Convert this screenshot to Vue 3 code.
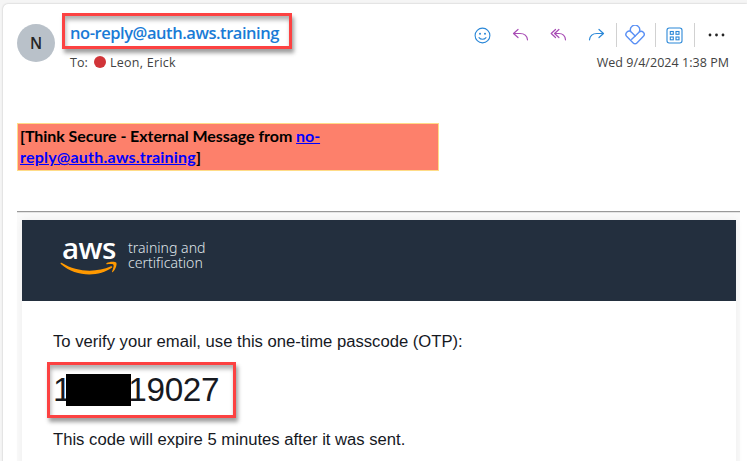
<script setup>
const dots = [2, 8.5, 15]
</script>

<template>
  <div class="page">
    <article class="card">
      <header class="head">
        <div class="avatar">N</div>
        <div class="who">
          <div class="sender mark"><span>no-reply@auth.aws.training</span></div>
          <div class="to"><span class="to-label">To:</span><i class="presence"></i><span class="name">Leon, Erick</span></div>
        </div>
        <div class="side">
          <div class="tools">
            <svg class="icon smile" viewBox="0 0 17 17"><g fill="none" stroke="#2b88d8"><circle cx="8.5" cy="8.5" r="7.4" stroke-width="1.1" /><path d="M5 10.6c1.7 2.2 5.3 2.2 7 0" stroke-width="1.1" stroke-linecap="round" /></g><circle cx="6" cy="6.8" r="1" fill="#2b88d8" /><circle cx="11" cy="6.8" r="1" fill="#2b88d8" /></svg>
            <svg class="icon reply" viewBox="0 0 17 14"><path d="M6 1.500 1.500 5.500l4.500 4M1.700 5.500h6.300c4.400 0 7 2 7.500 6.300" fill="none" stroke="#a84db5" stroke-width="1.2" stroke-linecap="round" stroke-linejoin="round" /></svg>
            <svg class="icon replyall" viewBox="0 0 17 14"><path d="M5.500 1.500 1.200 5.500l4.300 4M8.900 1.500 4.600 5.500l4.300 4M5 5.500h3.800c4 0 6.300 2 6.700 6.300" fill="none" stroke="#a84db5" stroke-width="1.2" stroke-linecap="round" stroke-linejoin="round" /></svg>
            <svg class="icon forward" viewBox="0 0 17 14"><path d="m11 1.500 4.500 4-4.500 4M15.300 5.500H9C4.600 5.500 2 7.500 1.500 11.800" fill="none" stroke="#2b88d8" stroke-width="1.2" stroke-linecap="round" stroke-linejoin="round" /></svg>
            <i class="sep"></i>
            <svg class="icon viva" viewBox="0 0 20 20"><g fill="none" stroke="#5b91f5" stroke-width="1.400" stroke-linejoin="round" stroke-linecap="round"><path d="M6.100 7.200A4.600 4.600 0 1 1 14 7.200L10.200 10.900 6.500 7.300A3 3 0 0 0 1.800 11.600L8.200 18a2.600 2.600 0 0 0 3.700 0l6.300-6.400A3 3 0 0 0 14 7.200" /><path d="m10.200 10.900-3.500 3.400" /></g></svg>
            <i class="sep"></i>
            <svg class="icon apps" viewBox="0 0 17 17"><g fill="none" stroke="#2b88d8" stroke-width="1.1"><rect x="1" y="1" width="15" height="15" rx="2.2" /><rect x="4.3" y="4.5" width="3" height="2.8" /><rect x="10" y="4.5" width="3" height="2.8" /><rect x="4.3" y="10" width="3" height="2.8" /><rect x="10" y="10" width="3" height="2.8" /></g></svg>
            <i class="sep"></i>
            <svg class="icon more" viewBox="0 0 17 4"><circle v-for="x in dots" :key="x" :cx="x" cy="2" r="1.4" fill="#242424" /></svg>
          </div>
          <time class="date">Wed 9/4/2024 1:38 PM</time>
        </div>
      </header>

      <div class="warning">
        <div class="line"><span class="w1">[Think Secure - External Message from <a>no-</a></span></div>
        <div class="line"><span class="w2"><a>reply@auth.aws.training</a>]</span></div>
      </div>

      <div class="rule"></div>

      <section class="mail">
        <div class="sheet">
          <div class="banner">
            <div class="logo">
              <span class="aws">aws</span>
              <svg class="swoosh" viewBox="0 0 58 15"><path d="M.5 2.2C.8 1.5 1.4 1.6 2 2c15 9.300 34 9.800 49 3.300 1.200-.4 1.800.7.8 1.500C39 16 16 16.500.8 3Z" fill="#f90" /><path d="M46.500 2.200C49 .3 55 .2 56.200 1.500c1.100 1.500-.5 7-3.400 9.500-.7.4-1 .1-.7-.6 1-2.400 2-5.800 1.300-6.700-.8-.9-4.200-.6-6.300-.4-.8 0-1.200-.6-.6-1.100Z" fill="#f90" /></svg>
            </div>
            <div class="tagline">training and<br />certification</div>
          </div>
          <div class="body">
            <p class="text verify">To verify your email, use this one-time passcode (OTP):</p>
            <div class="otp mark"><span>1</span><i class="redact"></i><span>19027</span></div>
            <p class="text expire">This code will expire 5 minutes after it was sent.</p>
          </div>
        </div>
      </section>
    </article>
  </div>
</template>

<style>
body { background: #f5f5f5; overflow: hidden; }
</style>

<style scoped>
* { box-sizing: border-box; }
.page { width: 747px; height: 461px; padding: 4px 0 0 3px; overflow: hidden; background: #f5f5f5; }
.card { height: 470px; background: #fff; border-radius: 5px 0 0 0; box-shadow: 0 0 2px rgba(0, 0, 0, .25); overflow: hidden; }
.head { display: flex; height: 119px; padding: 9px 18px 0 14px; font-family: "Open Sans", "Noto Sans", sans-serif; }
.avatar { flex: none; width: 38px; height: 38px; margin-top: 11px; border-radius: 50%; background: #b9c1c9; color: #252525; font-size: 15.500px; font-weight: 600; line-height: 38px; text-align: center; }
.mark { border: 3px solid #fc4242; box-shadow: 2px 4px 4px rgba(0, 0, 0, .38), inset 1px 4px 4px rgba(0, 0, 0, .3); }
.who { margin-left: 7px; width: 230px; flex: none; white-space: nowrap; }
.sender { height: 36px; padding-left: 5px; color: #1a7bd6; font-size: 16.500px; font-weight: 600; line-height: 34px; letter-spacing: -.45px; }
.to { display: flex; align-items: center; height: 20px; margin-top: 3px; padding-left: 8px; font-size: 12.500px; color: #424242; }
.to-label { width: 24px; }
.presence { width: 12px; height: 12px; border-radius: 50%; background: #d13438; }
.name { margin-left: 4px; letter-spacing: .27px; }
.side { flex: 1; display: flex; flex-direction: column; }
.tools { display: flex; align-items: center; height: 44px; padding-left: 182px; }
.icon { display: block; flex: none; }
.smile, .apps { width: 17px; height: 17px; }
.reply, .replyall, .forward { width: 17px; height: 14px; }
.reply, .replyall, .forward { margin-left: 21px; }
.sep { flex: none; width: 1px; height: 24px; background: #d1d1d1; }
.forward + .sep { margin-left: 11px; }
.viva { width: 20px; height: 20px; margin: 0 10px 0 8px; }
.apps { margin: 0 11px 0 10px; }
.more { width: 17px; height: 4px; margin-left: 13px; }
.date { align-self: flex-end; margin-top: -3px; line-height: 18px; font-size: 12.500px; letter-spacing: .04px; color: #424242; white-space: nowrap; }
.warning { width: 422px; height: 48px; margin-left: 14px; padding: 1px 2px; border: 1px solid #ffdc87; background: #fd806b; color: #000; font: bold 16px/21px Lato, "Open Sans", sans-serif; white-space: nowrap; }
.line { height: 21px; }
.w1 { letter-spacing: -.06px; }
.w2 { letter-spacing: .2px; }
.warning a { color: #00f; text-decoration: underline; }
.rule { height: 2px; margin: 40px 7px 0 14px; border-top: 1px solid #999; border-bottom: 1px solid #e4e4e4; }
.mail { height: 260px; margin: 0 7px 0 14px; padding: 7px 4px 0 5px; background: #fafafa; }
.sheet { width: 714px; height: 253px; background: #fff; box-shadow: 0 0 8px rgba(0, 0, 0, .06); }
.banner { display: flex; height: 81px; padding: 17px 0 0 38px; background: #232f3e; }
.logo { width: 59px; }
.aws { display: block; height: 24px; padding-left: 2px; color: #fff; font: 600 29.500px/22px "Open Sans", sans-serif; letter-spacing: -.6px; }
.swoosh { display: block; width: 58px; height: 15px; }
.tagline { margin-left: 9px; padding-top: 3px; color: #dfe3e8; font: 300 14.100px/15px "Noto Sans", sans-serif; white-space: nowrap; }
.body { padding-left: 31px; color: #16191f; font-family: "Liberation Sans", sans-serif; }
.text { margin: 0; font-size: 16.650px; line-height: 20px; white-space: nowrap; }
.verify { padding-top: 31px; }
.otp { display: flex; align-items: center; width: 189px; height: 56px; margin: 10px 0 0 -6px; padding-left: 3px; font-size: 33.300px; letter-spacing: -.3px; line-height: 50px; white-space: nowrap; }
.redact { position: relative; flex: none; width: 65px; height: 32px; margin: 0 -3px 0 -5px; background: #000; }
.expire { padding-top: 12px; }
</style>
